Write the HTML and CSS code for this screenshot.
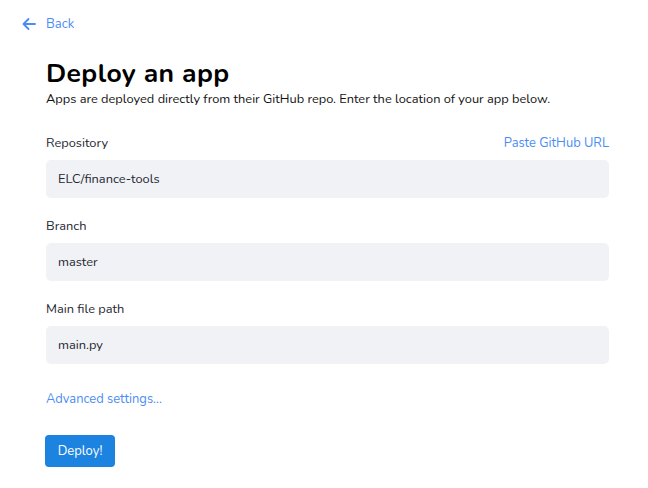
FILE: index.html
```html
<!DOCTYPE html>
<html>
<head>
<meta charset="utf-8">
<link rel="stylesheet" href="styles.css">
</head>
<body>
<div class="page">
  <a class="back" href="#">
    <svg class="back-icon" width="16" height="16" viewBox="0 0 16 16" fill="none" stroke="#4b8cf3" stroke-width="1.8" stroke-linecap="round" stroke-linejoin="round"><path d="M14 8H2.5M7.5 3L2.5 8l5 5"/></svg>
    <span>Back</span>
  </a>
  <div class="content">
    <h1 class="title">Deploy an app</h1>
    <p class="subtitle">Apps are deployed directly from their GitHub repo. Enter the location of your app below.</p>
    <div class="field">
      <div class="label-row"><span class="label">Repository</span><a class="link" href="#">Paste GitHub URL</a></div>
      <div class="input">ELC/finance-tools</div>
    </div>
    <div class="field">
      <div class="label-row"><span class="label">Branch</span></div>
      <div class="input">master</div>
    </div>
    <div class="field">
      <div class="label-row"><span class="label">Main file path</span></div>
      <div class="input">main.py</div>
    </div>
    <a class="link advanced" href="#">Advanced settings...</a>
    <button class="deploy">Deploy!</button>
  </div>
</div>
</body>
</html>
```
FILE: styles.css
```css
* { box-sizing: border-box; }
body {
  margin: 0;
  font-family: "Nunito", "Lato", "Open Sans", sans-serif;
  color: #262730;
  background: #fff;
}
.page {
  padding: 15px 39px 0 21px;
}
.back {
  display: flex;
  align-items: center;
  gap: 9px;
  height: 18px;
  color: #4b8cf3;
  text-decoration: none;
  font-size: 13px;
}
.back-icon { display: block; }
.content {
  padding: 24px 0 0 25px;
}
.title {
  margin: 0;
  font-size: 26.5px;
  letter-spacing: 0.4px;
  font-weight: 700;
  line-height: 32px;
  color: #000;
}
.subtitle {
  margin: 1px 0 0;
  font-size: 12.8px;
  line-height: 18px;
  color: #111;
}
.field { margin-top: 24px; }
.field + .field { margin-top: 17px; }
.label-row {
  display: flex;
  justify-content: space-between;
  align-items: center;
  height: 22px;
  font-size: 12.8px;
  margin-bottom: 6px;
}
.label { color: #262730; }
.link {
  color: #4b8cf3;
  text-decoration: none;
  font-size: 12.9px;
}
.input {
  height: 38px;
  background: #f0f2f6;
  border-radius: 5px;
  padding: 0 12px;
  display: flex;
  align-items: center;
  font-size: 12.8px;
  color: #262730;
}
.advanced {
  display: block;
  margin-top: 26px;
  line-height: 18px;
}
.deploy {
  display: block;
  margin-top: 27px;
  margin-left: -1px;
  height: 32px;
  width: 70px;
  border: none;
  border-radius: 4px;
  background: #1c83e1;
  color: #fff;
  font-family: inherit;
  font-size: 13px;
  padding: 0;
}
```
